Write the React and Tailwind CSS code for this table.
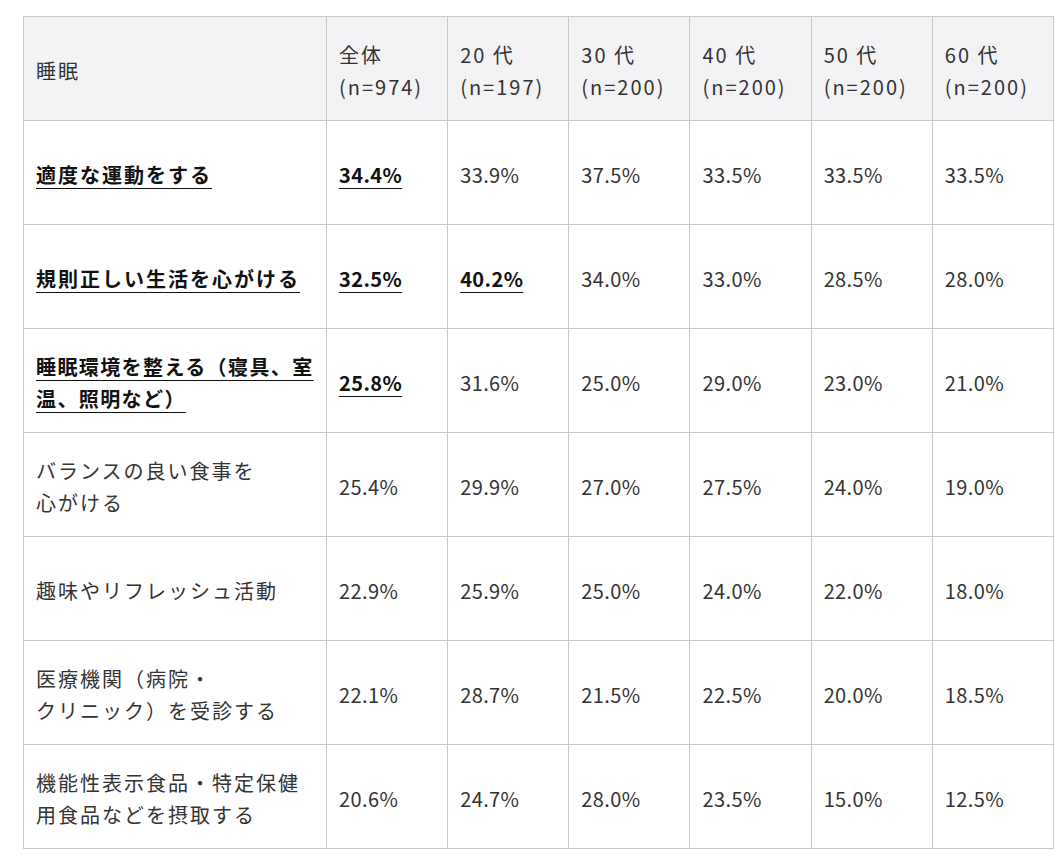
const headers = [
    ['全体', '(n=974)'],
    ['20 代', '(n=197)'],
    ['30 代', '(n=200)'],
    ['40 代', '(n=200)'],
    ['50 代', '(n=200)'],
    ['60 代', '(n=200)'],
];

// b: bold + underlined cells
const rows = [
    { label: '適度な運動をする', bold: true, values: ['34.4%', '33.9%', '37.5%', '33.5%', '33.5%', '33.5%'], b: [0] },
    { label: '規則正しい生活を心がける', bold: true, values: ['32.5%', '40.2%', '34.0%', '33.0%', '28.5%', '28.0%'], b: [0, 1] },
    { label: '睡眠環境を整える（寝具、室\n温、照明など）', bold: true, values: ['25.8%', '31.6%', '25.0%', '29.0%', '23.0%', '21.0%'], b: [0] },
    { label: 'バランスの良い食事を\n心がける', values: ['25.4%', '29.9%', '27.0%', '27.5%', '24.0%', '19.0%'], b: [] },
    { label: '趣味やリフレッシュ活動', values: ['22.9%', '25.9%', '25.0%', '24.0%', '22.0%', '18.0%'], b: [] },
    { label: '医療機関（病院・\nクリニック）を受診する', values: ['22.1%', '28.7%', '21.5%', '22.5%', '20.0%', '18.5%'], b: [] },
    { label: '機能性表示食品・特定保健\n用食品などを摂取する', values: ['20.6%', '24.7%', '28.0%', '23.5%', '15.0%', '12.5%'], b: [] },
];

const cell = 'border border-[#c8c8c8] pl-3 pt-1 align-middle';
const strong = 'font-bold text-[#111] underline underline-offset-[5px] decoration-1';

export default function App() {
    return (
        <div className="bg-white min-h-[856px] pt-4 pl-[23px] font-['Noto_Sans_CJK_JP','Noto_Sans',sans-serif] text-[20px] leading-[32px] tracking-[0.1em] text-[#333]">
            <table className="w-[1031px] table-fixed border-collapse">
                <colgroup>
                    <col className="w-[303px]" />
                    <col /><col /><col /><col /><col /><col />
                </colgroup>
                <thead>
                    <tr className="h-[104px] bg-[#f3f2f5]">
                        <th className={`${cell} text-left font-normal`}>睡眠</th>
                        {headers.map((h, i) => (
                            <th key={i} className={`${cell} pr-2 text-left font-normal`}>
                                {h[0]}<br />{h[1]}
                            </th>
                        ))}
                    </tr>
                </thead>
                <tbody>
                    {rows.map((row, idx) => (
                        <tr key={idx} className="h-[104px]">
                            <td className={`${cell} whitespace-pre ${idx === 2 ? 'tracking-[0.07em]' : ''}`}>
                                <span className={row.bold ? strong : ''}>{row.label}</span>
                            </td>
                            {row.values.map((v, i) => (
                                <td key={i} className={`${cell} pr-2 tracking-[0.02em]`}>
                                    <span className={row.b.includes(i) ? strong : ''}>{v}</span>
                                </td>
                            ))}
                        </tr>
                    ))}
                </tbody>
            </table>
        </div>
    );
}
